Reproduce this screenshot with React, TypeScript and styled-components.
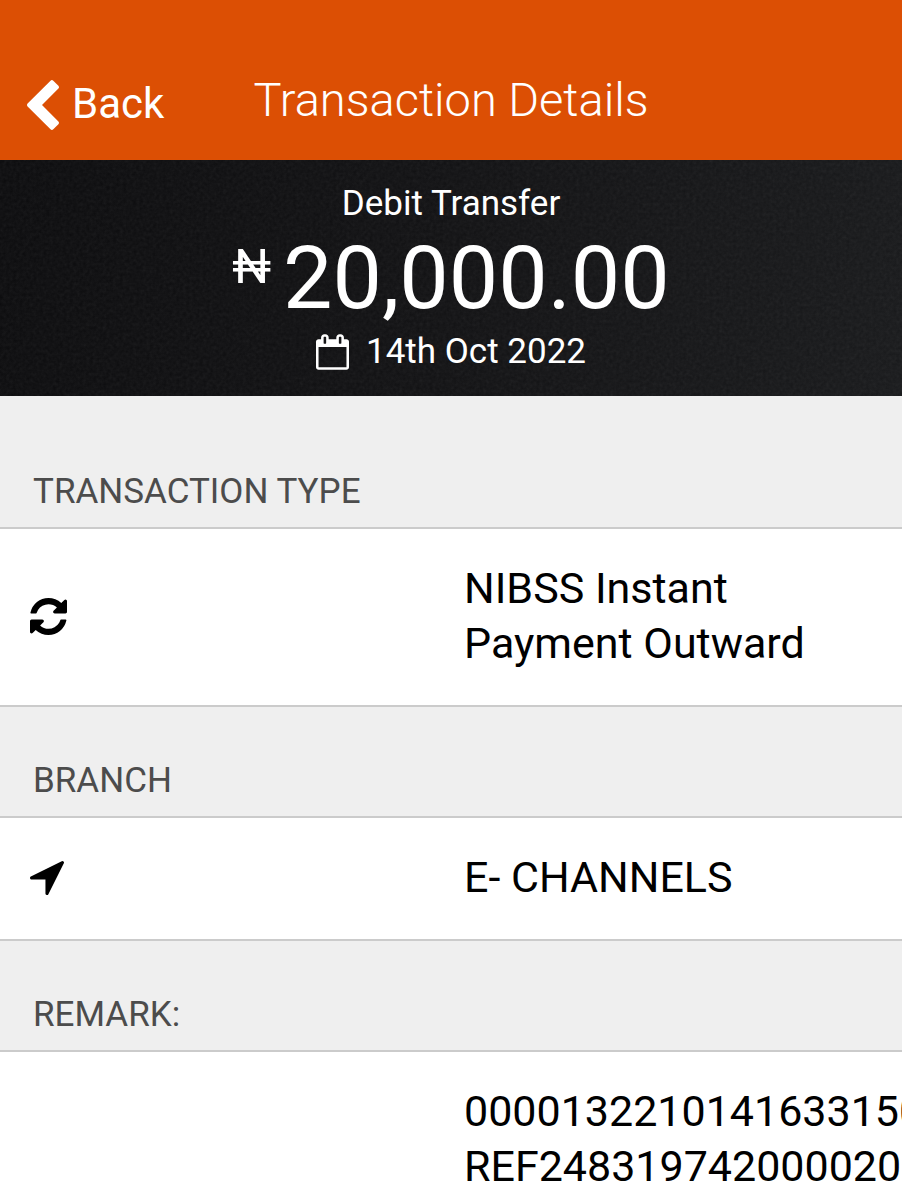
import React from "react";
import styled, { createGlobalStyle } from "styled-components";

const GlobalStyle = createGlobalStyle`
  *, *::before, *::after { box-sizing: border-box; }
  body {
    margin: 0;
    background: #fff;
    color: #000;
    font-family: Roboto, "Liberation Sans", sans-serif;
    overflow-x: hidden;
  }
`;

const Page = styled.div`
  min-height: 100vh;
  overflow: hidden;
`;

const TopBar = styled.header`
  display: grid;
  grid-template-columns: 1fr auto 1fr;
  padding: 70px 27px 30px;
  background: #dc4f04;
  color: #fff;
`;

const BackButton = styled.button`
  display: flex;
  align-items: center;
  justify-self: start;
  align-self: end;
  gap: 13px;
  padding: 0;
  border: 0;
  background: none;
  color: inherit;
  font: inherit;
  font-size: 42px;
  line-height: 46px;
  cursor: pointer;
`;

const BackLabel = styled.span`
  padding-bottom: 3px;
`;

const Title = styled.h1`
  margin: 0;
  font-size: 47px;
  font-weight: 300;
  line-height: 60px;
`;

const Summary = styled.section`
  position: relative;
  display: flex;
  flex-direction: column;
  align-items: center;
  gap: 1px;
  padding: 23px 16px;
  background: linear-gradient(100deg, #0b0b0d 0%, #111113 50%, #18191b 100%);
  color: #fff;
`;

const Grain = styled.svg`
  position: absolute;
  inset: 0;
  width: 100%;
  height: 100%;
  opacity: 0.08;
`;

const Line = styled.p`
  position: relative;
  display: flex;
  align-items: center;
  gap: 17px;
  margin: 0;
  font-size: 35px;
  line-height: 42px;
`;

const Amount = styled.p`
  position: relative;
  display: flex;
  align-items: flex-start;
  gap: 12px;
  margin: 0;
  font-size: 88px;
  line-height: 104px;
`;

const Currency = styled.span`
  padding-top: 12px;
  font-size: 49px;
  line-height: 57px;
`;

const Group = styled.section<{ $first?: boolean }>`
  padding-top: ${(p) => (p.$first ? 22 : 0)}px;
  background: #efefef;
`;

const GroupLabel = styled.h2`
  margin: 0;
  padding: 53px 33px 15px;
  color: #4c4c4c;
  font-size: 35px;
  font-weight: 400;
  line-height: 41px;
`;

const Row = styled.div`
  display: grid;
  grid-template-columns: minmax(0, 1fr) minmax(0, 1fr);
  align-items: center;
  padding: 32px 0 34px;
  border: solid #cbcbcb;
  border-width: 2px 0;
  background: #fff;
`;

const IconCell = styled.div`
  display: flex;
  padding-left: 30px;
`;

const Value = styled.p`
  margin: 0;
  padding: 0 13px;
  font-size: 43px;
  line-height: 55px;
`;

type Glyph = { box: string; width: number; height: number; path: string };

const glyphs: Record<"back" | "calendar" | "refresh" | "arrow", Glyph> = {
  back: {
    box: "410 26 1036 1612",
    width: 32,
    height: 50,
    path: "M1427 301l-531 531 531 531q19 19 19 45t-19 45l-166 166q-19 19-45 19t-45-19l-742-742q-19-19-19-45t19-45l742-742q19-19 45-19t45 19l166 166q19 19 19 45t-19 45z",
  },
  calendar: {
    box: "64 0 1664 1792",
    width: 33,
    height: 36,
    path: "M192 1664h1408v-1024h-1408v1024zm384-1216v-288q0-14-9-23t-23-9h-64q-14 0-23 9t-9 23v288q0 14 9 23t23 9h64q14 0 23-9t9-23zm768 0v-288q0-14-9-23t-23-9h-64q-14 0-23 9t-9 23v288q0 14 9 23t23 9h64q14 0 23-9t9-23zm384-64v1280q0 52-38 90t-90 38h-1408q-52 0-90-38t-38-90v-1280q0-52 38-90t90-38h128v-96q0-66 47-113t113-47h64q66 0 113 47t47 113v96h384v-96q0-66 47-113t113-47h64q66 0 113 47t47 113v96h128q52 0 90 38t38 90z",
  },
  refresh: {
    box: "128 128 1536 1536",
    width: 37,
    height: 37,
    path: "M1639 1056q0 5-1 7-64 268-268 434.500t-478 166.500q-146 0-282.500-55t-243.500-157l-129 129q-19 19-45 19t-45-19-19-45v-448q0-26 19-45t45-19h448q26 0 45 19t19 45-19 45l-137 137q71 66 161 102t187 36q134 0 250-65t186-179q11-17 53-117 8-23 30-23h192q13 0 22.500 9.500t9.500 22.500zm25-800v448q0 26-19 45t-45 19h-448q-26 0-45-19t-19-45 19-45l138-138q-148-137-349-137-134 0-250 65t-186 179q-11 17-53 117-8 23-30 23h-199q-13 0-22.500-9.500t-9.500-22.500v-7q65-268 270-434.500t480-166.500q146 0 284 55.500t245 156.500l130-129q19-19 45-19t45 19 19 45z",
  },
  arrow: {
    box: "192 256 1408 1408",
    width: 34,
    height: 34,
    path: "M1593 349l-640 1280q-17 35-57 35-5 0-15-2-22-5-35.500-22.500t-13.500-39.500v-576h-576q-22 0-39.500-13.500t-22.500-35.500 4-42 29-30l1280-640q13-7 29-7 27 0 45 19 15 14 18.500 34.500t-6.500 39.500z",
  },
};

function Icon({ name }: { name: keyof typeof glyphs }) {
  const g = glyphs[name];
  return (
    <svg viewBox={g.box} width={g.width} height={g.height} fill="currentColor" aria-hidden="true">
      <path d={g.path} />
    </svg>
  );
}

type Detail = { label: string; lines: string; icon?: "refresh" | "arrow" };

const details: Detail[] = [
  { label: "TRANSACTION TYPE", lines: "NIBSS Instant Payment Outward", icon: "refresh" },
  { label: "BRANCH", lines: "E- CHANNELS", icon: "arrow" },
  { label: "REMARK:", lines: "0000132210141633150 REF2483197420000200" },
];

export default function App() {
  return (
    <Page>
      <GlobalStyle />
      <TopBar>
        <BackButton type="button">
          <Icon name="back" />
          <BackLabel>Back</BackLabel>
        </BackButton>
        <Title>Transaction Details</Title>
      </TopBar>
      <main>
        <Summary>
          <Grain aria-hidden="true">
            <filter id="grain" x="0" y="0" width="100%" height="100%">
              <feTurbulence type="fractalNoise" baseFrequency="0.3" numOctaves="2" />
              <feColorMatrix type="saturate" values="0" />
            </filter>
            <rect width="100%" height="100%" filter="url(#grain)" />
          </Grain>
          <Line>Debit Transfer</Line>
          <Amount>
            <Currency>₦</Currency>
            20,000.00
          </Amount>
          <Line>
            <Icon name="calendar" />
            14th Oct 2022
          </Line>
        </Summary>
        {details.map((d, i) => (
          <Group key={d.label} $first={i === 0}>
            <GroupLabel>{d.label}</GroupLabel>
            <Row>
              <IconCell>{d.icon && <Icon name={d.icon} />}</IconCell>
              <Value>{d.lines}</Value>
            </Row>
          </Group>
        ))}
      </main>
    </Page>
  );
}
